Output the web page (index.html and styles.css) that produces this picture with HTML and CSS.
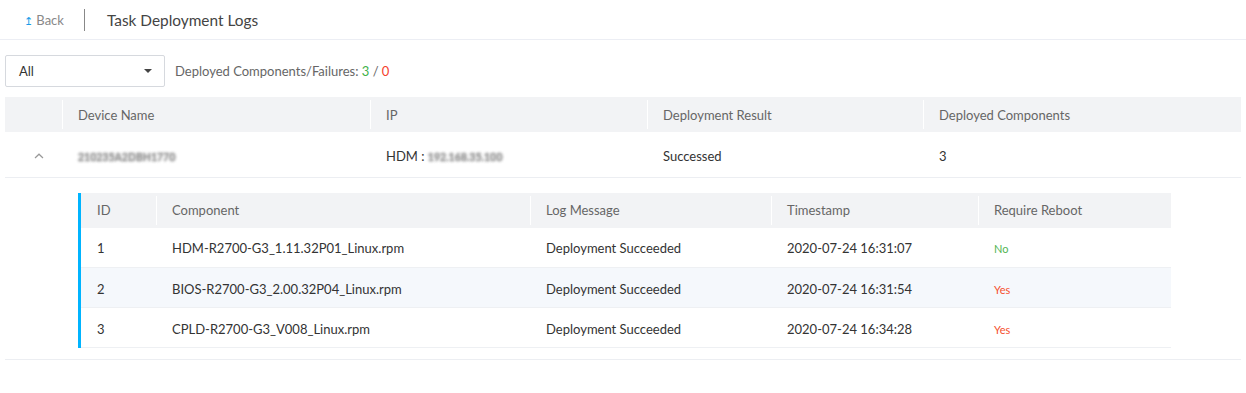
FILE: index.html
```html
<!DOCTYPE html>
<html lang="en">
<head>
<meta charset="UTF-8">
<link rel="stylesheet" href="styles.css">
<title>Task Deployment Logs</title>
</head>
<body>

<div class="topbar">
	<a class="back" href="#"><span class="back-arrow">&#8613;</span> Back</a>
	<span class="divider"></span>
	<h1 class="title">Task Deployment Logs</h1>
</div>

<div class="toolbar">
	<div class="select">
		<span>All</span>
		<span class="caret"></span>
	</div>
	<p class="summary">Deployed Components/Failures: <span class="ok">3</span> / <span class="fail">0</span></p>
</div>

<table class="grid">
	<colgroup>
		<col style="width:57px">
		<col style="width:308px">
		<col style="width:277px">
		<col style="width:276px">
		<col>
	</colgroup>
	<thead>
		<tr>
			<th></th>
			<th class="sep">Device Name</th>
			<th class="sep">IP</th>
			<th class="sep">Deployment Result</th>
			<th class="sep">Deployed Components</th>
		</tr>
	</thead>
	<tbody>
		<tr class="device">
			<td class="expand"><svg width="10" height="6" viewBox="0 0 10 6"><path d="M1 5 L5 1.2 L9 5" fill="none" stroke="#999" stroke-width="1.2"/></svg></td>
			<td><span class="blur">210235A2DBH1770</span></td>
			<td>HDM&nbsp;:&nbsp;<span class="blur">192.168.35.100</span></td>
			<td>Successed</td>
			<td>3</td>
		</tr>
		<tr class="detail">
			<td colspan="5">
				<div class="logs">
					<table class="sub">
						<colgroup>
							<col style="width:75px">
							<col style="width:374px">
							<col style="width:241px">
							<col style="width:207px">
							<col>
						</colgroup>
						<thead>
							<tr>
								<th>ID</th>
								<th class="sep">Component</th>
								<th class="sep">Log Message</th>
								<th class="sep">Timestamp</th>
								<th class="sep">Require Reboot</th>
							</tr>
						</thead>
						<tbody>
							<tr>
								<td>1</td>
								<td>HDM-R2700-G3_1.11.32P01_Linux.rpm</td>
								<td>Deployment Succeeded</td>
								<td>2020-07-24 16:31:07</td>
								<td><span class="no">No</span></td>
							</tr>
							<tr class="alt">
								<td>2</td>
								<td>BIOS-R2700-G3_2.00.32P04_Linux.rpm</td>
								<td>Deployment Succeeded</td>
								<td>2020-07-24 16:31:54</td>
								<td><span class="yes">Yes</span></td>
							</tr>
							<tr>
								<td>3</td>
								<td>CPLD-R2700-G3_V008_Linux.rpm</td>
								<td>Deployment Succeeded</td>
								<td>2020-07-24 16:34:28</td>
								<td><span class="yes">Yes</span></td>
							</tr>
						</tbody>
					</table>
				</div>
			</td>
		</tr>
	</tbody>
</table>

</body>
</html>
```

FILE: styles.css
```css
* {
	box-sizing: border-box;
}

body {
	margin: 0;
	background: #fff;
	color: #333;
	font: 13px Lato, "Open Sans", sans-serif;
}

/* header */

.topbar {
	height: 40px;
	display: flex;
	align-items: center;
	padding-left: 24px;
	border-bottom: 1px solid #eceef4;
}

.back {
	color: #888;
	text-decoration: none;
	font-size: 13px;
}

.back-arrow {
	color: #1a9be8;
	font-size: 11px;
}

.divider {
	width: 1px;
	height: 22px;
	background: #888;
	margin: 0 22px 0 20px;
}

.title {
	margin: 0;
	font-size: 15.4px;
	font-weight: normal;
	color: #444;
}

/* filter bar */

.toolbar {
	display: flex;
	align-items: center;
	margin: 15px 0 10px 5px;
}

.select {
	width: 160px;
	height: 32px;
	border: 1px solid #d6d9de;
	border-radius: 2px;
	display: flex;
	align-items: center;
	justify-content: space-between;
	padding: 0 12px 0 13px;
	font-size: 13px;
}

.caret {
	width: 0;
	height: 0;
	border-left: 4px solid transparent;
	border-right: 4px solid transparent;
	border-top: 4px solid #444;
}

.summary {
	margin: 0 0 0 10px;
	font-size: 13px;
	color: #666;
}

.ok { color: #3fb24a; }
.fail { color: #f5402c; }

/* tables */

table {
	border-collapse: collapse;
	table-layout: fixed;
}

.grid {
	width: 1236px;
	margin-left: 5px;
}

th {
	background: #f2f3f5;
	color: #666;
	font-weight: normal;
	text-align: left;
	height: 35px;
	padding: 0 16px;
	position: relative;
}

th.sep::before {
	content: "";
	position: absolute;
	left: 0;
	top: 3px;
	bottom: 3px;
	width: 1px;
	background: #fff;
}

td {
	padding: 2px 16px 0 16px;
	color: #333;
}

.device td {
	height: 45px;
	padding-top: 4px;
	border-bottom: 1px solid #eceef2;
}

.device td.expand {
	text-align: center;
	padding: 0 0 0 10px;
}

.blur {
	display: inline-block;
	color: transparent;
	text-shadow: 0 0 3px #9a9a9a, 0 0 3px #aaa;
	font-size: 10.5px;
	font-weight: bold;
}

.detail > td {
	padding: 15px 70px 11px 73px;
	border-bottom: 1px solid #eceef2;
}

.logs {
	border-left: 3px solid #00b4ff;
}

.sub {
	width: 100%;
}

.sub td {
	height: 40px;
	border-bottom: 1px solid #eef0f3;
}

.sub .alt td {
	background: #f5f8fc;
}

.no { color: #52b552; font-size: 11px; }
.yes { color: #f5502c; font-size: 11px; }
```
